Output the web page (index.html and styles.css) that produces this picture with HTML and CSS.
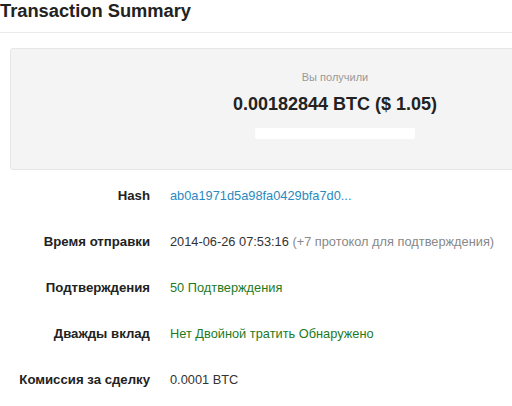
FILE: index.html
```html
<!DOCTYPE html>
<html>
<head>
<meta charset="utf-8">
<link rel="stylesheet" href="styles.css">
</head>
<body>
<div class="page">
  <h1 class="title">Transaction Summary</h1>
  <div class="divider"></div>
  <div class="summary">
    <div class="summary-label">Вы получили</div>
    <div class="summary-amount">0.00182844 BTC ($ 1.05)</div>
    <div class="summary-redact"></div>
  </div>
  <div class="details">
    <div class="row">
      <div class="label">Hash</div>
      <div class="value link">ab0a1971d5a98fa0429bfa7d0...</div>
    </div>
    <div class="row">
      <div class="label">Время отправки</div>
      <div class="value">2014-06-26 07:53:16 <span class="muted">(+7 протокол для подтверждения)</span></div>
    </div>
    <div class="row">
      <div class="label">Подтверждения</div>
      <div class="value green">50 Подтверждения</div>
    </div>
    <div class="row">
      <div class="label">Дважды вклад</div>
      <div class="value green">Нет Двойной тратить Обнаружено</div>
    </div>
    <div class="row">
      <div class="label">Комиссия за сделку</div>
      <div class="value">0.0001 BTC</div>
    </div>
  </div>
</div>
</body>
</html>
```
FILE: styles.css
```css
html, body {
  margin: 0;
  padding: 0;
  background: #fff;
  overflow: hidden;
}
body {
  font-family: "Liberation Sans", Arial, sans-serif;
  color: #333;
  width: 512px;
  height: 406px;
}
.page {
  width: 512px;
  overflow: hidden;
}
.title {
  margin: 0;
  padding: 1px 0 0 0;
  font-size: 18.3px;
  line-height: 20px;
  font-weight: bold;
  color: #222;
}
.divider {
  margin-top: 11px;
  height: 1px;
  background: #eaeaea;
  width: 512px;
}
.summary {
  margin: 15px 0 0 10px;
  width: 650px;
  height: 122px;
  box-sizing: border-box;
  background: #f4f4f4;
  border: 1px solid #e6e6e6;
  border-radius: 3px;
  display: flex;
  flex-direction: column;
  align-items: center;
  padding-top: 22px;
}
.summary-label {
  font-size: 11px;
  line-height: 12px;
  color: #999;
}
.summary-amount {
  margin-top: 11px;
  font-size: 18px;
  line-height: 20px;
  font-weight: bold;
  color: #222;
}
.summary-redact {
  margin-top: 14px;
  width: 160px;
  height: 11px;
  background: #fff;
  border-radius: 2px;
}
.details {
  display: flex;
  flex-direction: column;
  padding-top: 18px;
  gap: 30px;
}
.row {
  display: flex;
  align-items: center;
  height: 16px;
  line-height: 16px;
}
.label {
  width: 150px;
  text-align: right;
  font-weight: bold;
  font-size: 13.2px;
  color: #222;
  flex-shrink: 0;
}
.value {
  margin-left: 20px;
  font-size: 12.8px;
  color: #333;
  white-space: nowrap;
}
.link { color: #2a8ac0; }
.green { color: #1e7a1e; }
.muted { color: #888; }
```
